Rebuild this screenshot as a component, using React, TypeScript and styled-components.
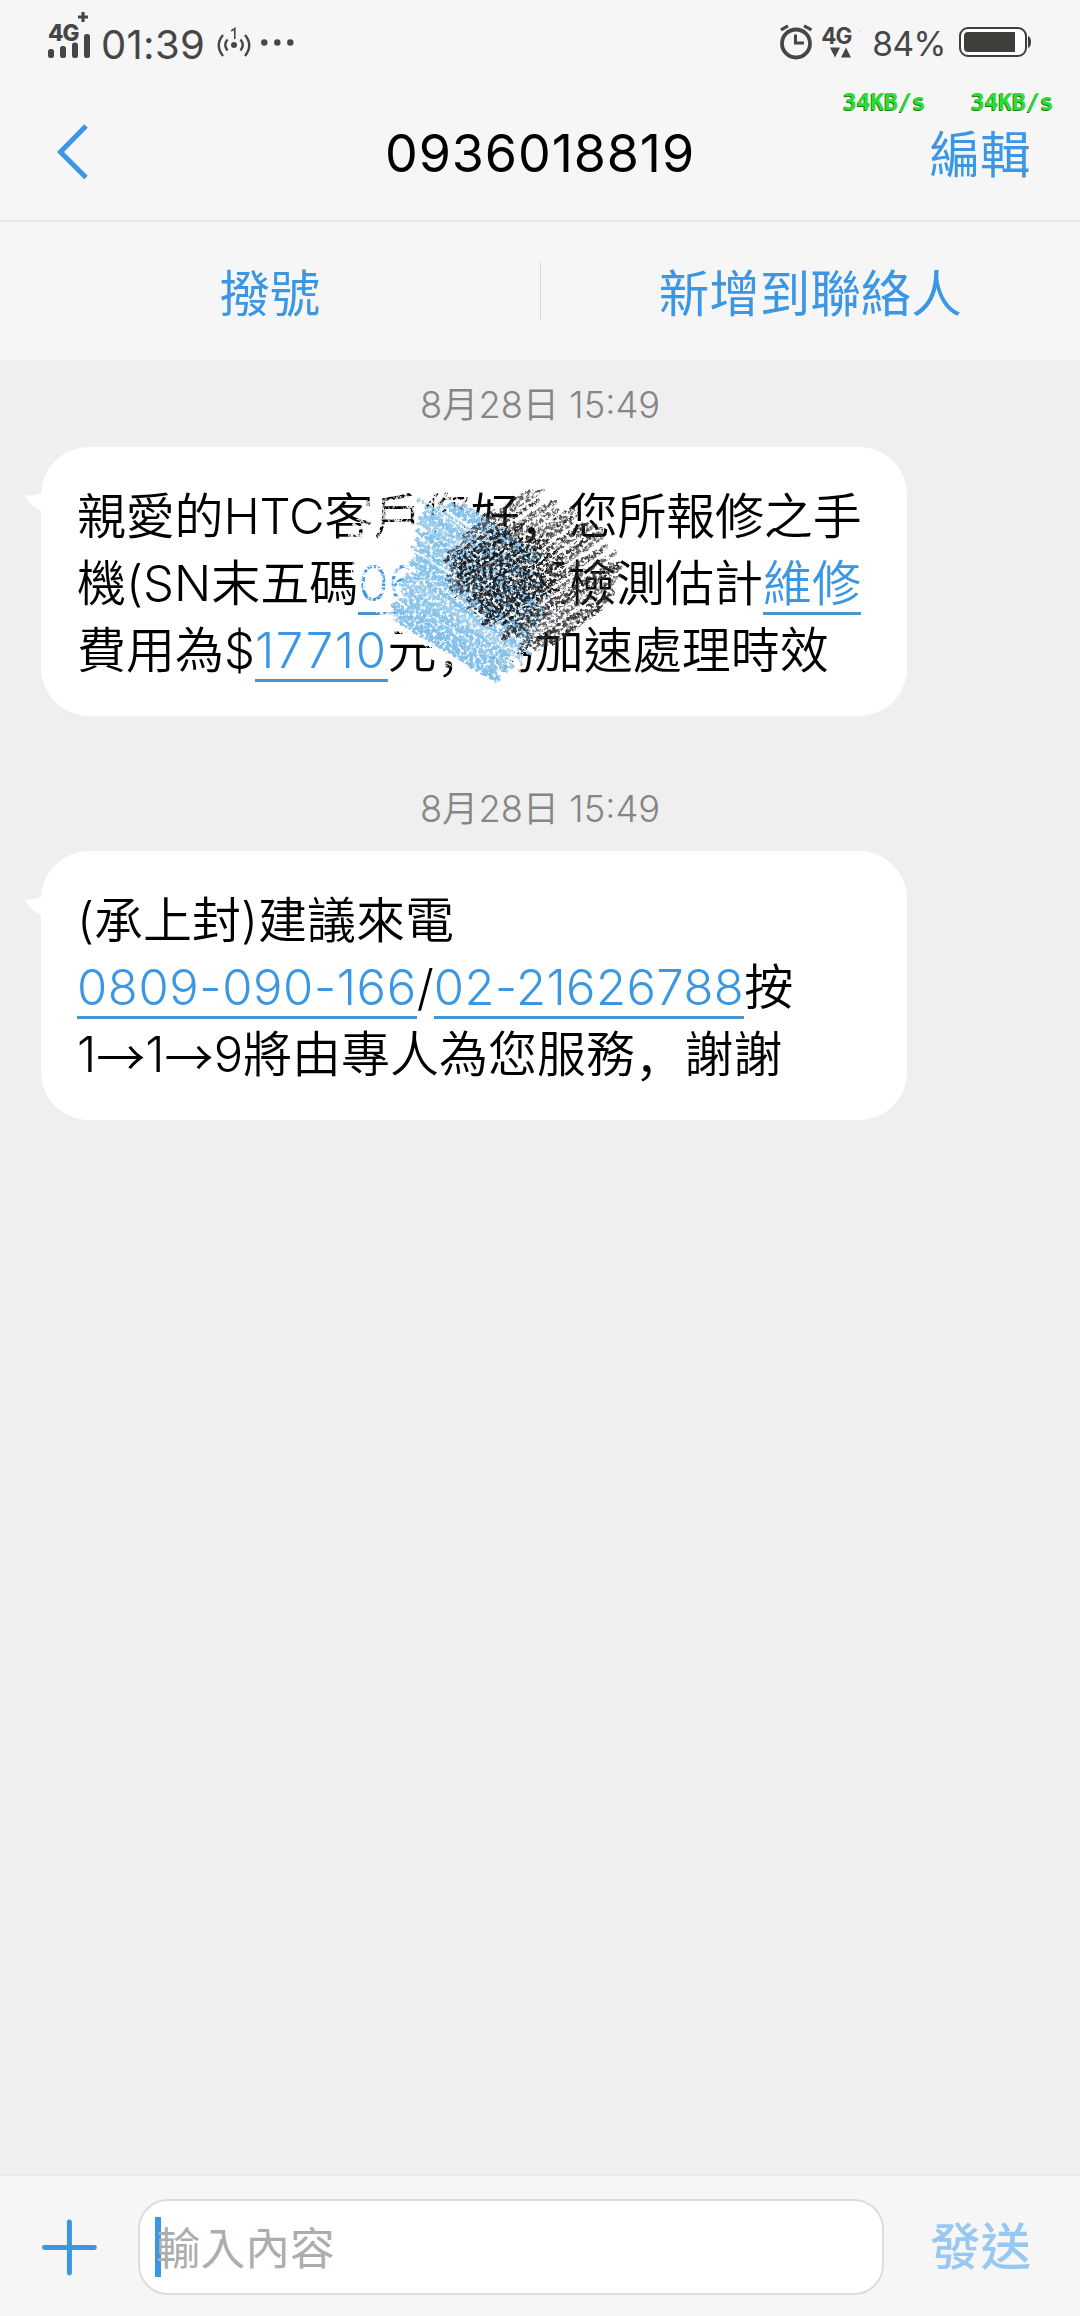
import React from "react";
import styled, { createGlobalStyle } from "styled-components";

const BLUE = "#3b97e3";
const UI_FONT = `Inter, "Noto Sans CJK TC", sans-serif`;

const GlobalStyle = createGlobalStyle`
  html, body { margin: 0; padding: 0; background: #efefef; }
  * { box-sizing: border-box; }
`;

const Screen = styled.div`
  width: 1080px;
  height: 2316px;
  display: flex;
  flex-direction: column;
  background: #efefef;
  font-family: ${UI_FONT};
  color: #000;
  overflow: hidden;
`;

const Top = styled.header`
  position: relative;
  height: 222px;
  background: #f6f6f6;
  border-bottom: 2px solid #e9e9e9;
  display: flex;
  flex-direction: column;
`;

const StatusBar = styled.div`
  height: 84px;
  padding: 0 48px;
  display: flex;
  justify-content: space-between;
  color: #464646;
`;

const StatusGroup = styled.div`
  display: flex;
  align-items: center;
  height: 84px;
`;

const StatusText = styled.span<{ $size: number; $spacing: number; $ml: number; $mr: number; $top: number }>`
  font-size: ${(p) => p.$size}px;
  letter-spacing: ${(p) => p.$spacing}px;
  line-height: 48px;
  margin-left: ${(p) => p.$ml}px;
  margin-right: ${(p) => p.$mr}px;
  padding-top: ${(p) => p.$top}px;
  white-space: nowrap;
`;

const NetworkMark = styled.span<{ $raise: number }>`
  display: flex;
  flex-direction: column;
  height: 40px;
  margin-top: ${(p) => p.$raise}px;
`;

const NetworkName = styled.span<{ $weight: number }>`
  display: flex;
  height: 21px;
  font-size: 22.5px;
  line-height: 21px;
  letter-spacing: -1px;
  font-weight: ${(p) => p.$weight};
`;

const SpeedRow = styled.div`
  position: absolute;
  top: 88px;
  right: 27px;
  display: flex;
  gap: 46px;
`;

const Speed = styled.span`
  font-family: "DejaVu Sans Mono", monospace;
  font-weight: 700;
  font-size: 22.9px;
  line-height: 28px;
  width: 82px;
  color: #2fdc2f;
  text-shadow: -1px 1px 0 #1a7d1a;
`;

const TitleBar = styled.div`
  height: 136px;
  display: grid;
  grid-template-columns: 200px 1fr 200px;
  align-items: center;
`;

const BackButton = styled.button`
  border: 0;
  background: none;
  padding: 0 0 0 57px;
  height: 56px;
  display: flex;
`;

const Title = styled.h1`
  margin: 0;
  padding-top: 3px;
  text-align: center;
  font-weight: 400;
  font-size: 52px;
  letter-spacing: 0.9px;
  line-height: 64px;
`;

const TextButton = styled.button<{ $weight?: number; $faded?: boolean; $drop?: number }>`
  border: 0;
  background: none;
  padding: ${(p) => p.$drop ?? 0}px 0 0;
  font-family: ${UI_FONT};
  font-size: 50.5px;
  line-height: 64px;
  font-weight: ${(p) => p.$weight ?? 400};
  color: ${(p) => (p.$faded ? "#98c8f2" : BLUE)};
  white-space: nowrap;
`;

const Actions = styled.nav`
  height: 138px;
  background: #f6f6f6;
  display: grid;
  grid-template-columns: 1fr 1px 1fr;
  align-items: center;
  text-align: center;
`;

const Divider = styled.i`
  height: 60px;
  background: #dcdcdc;
`;

const Thread = styled.main`
  flex: 1;
  padding-top: 3px;
  display: flex;
  flex-direction: column;
  align-items: flex-start;
`;

const Stamp = styled.time`
  align-self: stretch;
  height: 84px;
  line-height: 85px;
  text-align: center;
  font-size: 36.3px;
  font-weight: 350;
  color: #858585;
`;

const Bubble = styled.section`
  position: relative;
  width: 866px;
  height: 269px;
  margin: 0 0 51px 41px;
  padding: 34px 36px;
  background: #fff;
  border-radius: 48px;
`;

const Tail = styled.svg`
  position: absolute;
  left: -17px;
  top: 46px;
`;

const Line = styled.p<{ $spacing?: number }>`
  margin: 0;
  height: 67px;
  display: flex;
  white-space: nowrap;
  font-size: 49px;
  line-height: 72px;
  font-weight: 350;
  letter-spacing: ${(p) => p.$spacing ?? 0}px;
`;

const Link = styled.a<{ $spacing?: number }>`
  height: 67px;
  color: ${BLUE};
  border-bottom: 3px solid #4794cf;
  letter-spacing: ${(p) => p.$spacing ?? 0}px;
`;

const HiddenDigits = styled.span`
  display: inline-block;
  width: 100px;
`;

const CJK = styled.span<{ $shift?: number }>`
  font-family: "Noto Sans CJK SC", sans-serif;
  letter-spacing: ${(p) => p.$shift ?? 0}px;
`;

const Scribble = styled.svg`
  position: absolute;
  left: 299px;
  top: 33px;
  pointer-events: none;
`;

const Composer = styled.footer`
  height: 142px;
  background: #f6f6f6;
  border-top: 2px solid #e9e9e9;
  display: flex;
  align-items: center;
  padding: 2px 49px 0 41px;
`;

const Field = styled.div`
  width: 748px;
  height: 96px;
  margin: 0 46px 0 40px;
  padding-left: 15px;
  background: #fff;
  border: 2px solid #dcdcdc;
  border-radius: 30px;
  display: flex;
  align-items: center;
`;

const Caret = styled.i`
  width: 6px;
  height: 60px;
  background: ${BLUE};
`;

const Placeholder = styled.span`
  margin-left: -5px;
  padding-top: 3px;
  font-size: 44.7px;
  line-height: 60px;
  color: #adadad;
`;

type Pt = [number, number];
type Stroke = { x1: number; y1: number; x2: number; y2: number; w: number; o: number };

const makeRandom = (seed: number) => () => {
  seed = (seed * 1664525 + 1013904223) % 4294967296;
  return seed / 4294967296;
};

// Fills a polygon with roughly parallel hand-drawn strokes.
function hatch(poly: Pt[], deg: number, step: number, width: number, jitter: number, seed: number): Stroke[] {
  const rnd = makeRandom(seed);
  const a = (deg * Math.PI) / 180;
  const dx = Math.cos(a);
  const dy = Math.sin(a);
  const rotated = poly.map(([x, y]) => [x * dx + y * dy, -x * dy + y * dx] as Pt);
  const vs = rotated.map((p) => p[1]);
  const out: Stroke[] = [];
  for (let v = Math.min(...vs) + 1; v < Math.max(...vs); v += step * (0.6 + rnd() * 0.8)) {
    const hits: number[] = [];
    rotated.forEach((p, i) => {
      const q = rotated[(i + 1) % rotated.length];
      if (p[1] > v !== q[1] > v) hits.push(p[0] + ((v - p[1]) / (q[1] - p[1])) * (q[0] - p[0]));
    });
    if (hits.length < 2) continue;
    const u1 = Math.min(...hits) + (rnd() - 0.5) * jitter;
    const u2 = Math.max(...hits) + (rnd() - 0.5) * jitter;
    const v2 = v + (rnd() - 0.5) * 7;
    out.push({
      x1: u1 * dx - v * dy,
      y1: u1 * dy + v * dx,
      x2: u2 * dx - v2 * dy,
      y2: u2 * dy + v2 * dx,
      w: width * (0.6 + rnd() * 0.8),
      o: 0.7 + rnd() * 0.3,
    });
  }
  return out;
}

const paleStrokes = hatch([[34, 22], [75, 10], [125, 18], [125, 40], [60, 60], [70, 150], [110, 190], [60, 155], [20, 110], [12, 60]], 24, 4, 4.6, 14, 5);
const whiteStrokes = hatch([[85, 38], [135, 32], [230, 95], [215, 135], [178, 172], [182, 186], [130, 190], [65, 150], [72, 80]], 28, 2.6, 6, 10, 9);
const blueStrokes = hatch([[85, 24], [130, 28], [195, 72], [200, 130], [184, 170], [150, 200], [58, 142], [78, 75]], 33, 3.2, 4.6, 16, 11);
const blackStrokes = hatch([[112, 72], [150, 32], [196, 12], [225, 26], [272, 72], [276, 108], [258, 135], [210, 166], [190, 168], [140, 130], [106, 92]], -33, 4.8, 4.4, 18, 23);
const coreStrokes = hatch([[118, 82], [165, 45], [205, 60], [225, 100], [188, 138], [160, 148], [118, 100]], -33, 4.8, 4.2, 16, 41);

const Strokes = ({ items, color, filter }: { items: Stroke[]; color: string; filter: string }) => (
  <g stroke={color} strokeLinecap="round" filter={filter}>
    {items.map((s, i) => (
      <line key={i} x1={s.x1} y1={s.y1} x2={s.x2} y2={s.y2} strokeWidth={s.w} opacity={s.o} />
    ))}
  </g>
);

const Grain = ({ id, seed, gain, bias }: { id: string; seed: number; gain: number; bias: number }) => (
  <filter id={id} x="0" y="0" width="300" height="230" filterUnits="userSpaceOnUse" colorInterpolationFilters="sRGB">
    <feTurbulence type="fractalNoise" baseFrequency="0.3" numOctaves="3" seed={seed} result="n" />
    <feColorMatrix in="n" type="matrix" values={`0 0 0 0 0  0 0 0 0 0  0 0 0 0 0  ${gain} 0 0 0 ${bias}`} result="m" />
    <feDisplacementMap in="SourceGraphic" in2="n" scale="5" xChannelSelector="R" yChannelSelector="G" result="d" />
    <feComposite in="d" in2="m" operator="in" />
  </filter>
);

const CrayonScribble = () => (
  <Scribble width="300" height="230" viewBox="0 0 300 230">
    <defs>
      <Grain id="grainPale" seed={3} gain={7} bias={-2.7} />
      <Grain id="grainWhite" seed={5} gain={6} bias={-1.2} />
      <Grain id="grainBlue" seed={8} gain={5} bias={-1.5} />
      <Grain id="grainBlack" seed={14} gain={5} bias={-1.9} />
    </defs>
    <Strokes items={paleStrokes} color="#fff" filter="url(#grainPale)" />
    <Strokes items={whiteStrokes} color="#fff" filter="url(#grainWhite)" />
    <Strokes items={blueStrokes} color="#80bfea" filter="url(#grainBlue)" />
    <Strokes items={blackStrokes} color="#2e2e2e" filter="url(#grainBlack)" />
    <Strokes items={coreStrokes} color="#16191c" filter="url(#grainBlack)" />
  </Scribble>
);

const BubbleTail = () => (
  <Tail width="20" height="20" viewBox="0 0 20 20" fill="#fff">
    <path d="M0.5 2C7 3 13 2 18 0V18C10 15 4 9 0.5 2Z" />
  </Tail>
);

const PlusMark = ({ size }: { size: number }) => (
  <svg width="10" height="10" viewBox="0 0 10 10" stroke="#464646" strokeWidth={size}>
    <path d="M5 0V10M0 5H10" />
  </svg>
);

const SignalBars = () => (
  <svg width="43" height="25" viewBox="0 11 43 25" fill="#464646">
    <rect x="0" y="27" width="6" height="9" rx="2.5" />
    <rect x="12" y="24" width="6" height="12" rx="2.5" />
    <rect x="24" y="20.5" width="6" height="15.5" rx="2.5" />
    <rect x="36" y="12" width="6" height="24" rx="2.5" />
  </svg>
);

const SignalColumn = styled(NetworkMark)`
  width: 43px;
  svg:last-child { margin-top: -10px; }
`;

const DataColumn = styled(NetworkMark)`
  width: 40px;
  svg:last-child { margin: 1px 0 0 9px; }
`;

const HotspotIcon = () => (
  <svg width="34" height="34" viewBox="0 0 34 34" fill="none" stroke="#464646" strokeWidth="2.4">
    <circle cx="17" cy="20" r="3" fill="#464646" stroke="none" />
    <path d="M10.5 14.5Q6 20 10.5 25.500M23.5 14.5Q28 20 23.5 25.500M6 10Q-2.500 20 6 31M28 10Q36.500 20 28 31" />
    <path d="M14.2 6L17.8 3.500V14" strokeWidth="1.6" />
  </svg>
);

const MoreDots = () => (
  <svg width="33" height="7" viewBox="0 0 33 7" fill="#464646">
    <circle cx="3.300" cy="3.500" r="3.200" />
    <circle cx="16.300" cy="3.500" r="3.200" />
    <circle cx="29.300" cy="3.500" r="3.200" />
  </svg>
);

const AlarmIcon = () => (
  <svg width="33" height="36" viewBox="0 0 33 36" fill="none" stroke="#464646">
    <circle cx="16" cy="19.500" r="14" strokeWidth="3.800" />
    <path d="M15.500 10.500V19H24" strokeWidth="3" />
    <path d="M1 5.800L8 1.800M24 1.800L31.500 5.800" strokeWidth="3.200" />
  </svg>
);

const DataArrows = () => (
  <svg width="22" height="11" viewBox="0 0 22 11" fill="#464646">
    <path d="M0 0.500H10L5 10.500zM11 10.500H21L16 0.500z" />
  </svg>
);

const BatteryIcon = () => (
  <svg width="73" height="32" viewBox="0 0 73 32">
    <rect x="1" y="2" width="66" height="28" rx="8" fill="#fff" stroke="#3e3e3a" strokeWidth="2" />
    <path d="M9 6H56V26H9Q5 26 5 22V10Q5 6 9 6Z" fill="#3e3f3a" />
    <path d="M69 10Q72 11 72 16T69 22Z" fill="#3e3f3a" />
  </svg>
);

const Gap = styled.i<{ $w: number }>`
  width: ${(p) => p.$w}px;
`;

export default function App() {
  return (
    <Screen>
      <GlobalStyle />
      <Top>
        <StatusBar>
          <StatusGroup>
            <SignalColumn $raise={-1}>
              <NetworkName $weight={800}>4G<PlusMark size={3.2} /></NetworkName>
              <SignalBars />
            </SignalColumn>
            <StatusText $size={40} $spacing={0.3} $ml={10} $mr={12} $top={5}>01:39</StatusText>
            <HotspotIcon />
            <Gap $w={10} />
            <MoreDots />
          </StatusGroup>
          <StatusGroup>
            <AlarmIcon />
            <Gap $w={8} />
            <DataColumn $raise={5}>
              <NetworkName $weight={700}>4G<PlusMark size={3} /></NetworkName>
              <DataArrows />
            </DataColumn>
            <StatusText $size={33.5} $spacing={-0.5} $ml={11} $mr={13} $top={3}>84%</StatusText>
            <BatteryIcon />
          </StatusGroup>
        </StatusBar>
        <TitleBar>
          <BackButton aria-label="返回">
            <svg width="32" height="56" viewBox="0 0 32 56" fill="none" stroke={BLUE} strokeWidth="5">
              <path d="M29 2L3.500 28L29 53.500" />
            </svg>
          </BackButton>
          <Title>0936018819</Title>
          <TextButton $drop={6}>編輯</TextButton>
        </TitleBar>
        <SpeedRow>
          <Speed>34KB/s</Speed>
          <Speed>34KB/s</Speed>
        </SpeedRow>
      </Top>
      <Actions>
        <TextButton $drop={5}>撥號</TextButton>
        <Divider />
        <TextButton $drop={5}>新增到聯絡人</TextButton>
      </Actions>
      <Thread>
        <Stamp>8月28日 15:49</Stamp>
        <Bubble>
          <BubbleTail />
          <Line $spacing={-0.2}>親愛的HTC客戶您好<CJK>，</CJK>您所報修之手</Line>
          <Line>機(SN末五碼<Link>06<HiddenDigits /></Link>經檢測估計<Link>維修</Link></Line>
          <Line>費用為$<Link $spacing={1.6}>17710</Link>元<CJK>，</CJK>為加速處理時效</Line>
          <CrayonScribble />
        </Bubble>
        <Stamp>8月28日 15:49</Stamp>
        <Bubble>
          <BubbleTail />
          <Line>(承上封)建議來電</Line>
          <Line><Link $spacing={0.6}>0809-090-166</Link>/<Link $spacing={0.4}>02-21626788</Link>按</Line>
          <Line>1<CJK>→</CJK>1<CJK>→</CJK>9將由專人為您服務<CJK>，</CJK>謝謝</Line>
        </Bubble>
      </Thread>
      <Composer>
        <svg width="57" height="57" viewBox="0 0 57 57" stroke={BLUE} strokeWidth="5" strokeLinecap="round">
          <path d="M28.500 3V54M3.500 28.500H53.500" />
        </svg>
        <Field>
          <Caret />
          <Placeholder>輸入內容</Placeholder>
        </Field>
        <TextButton $weight={500} $faded>發送</TextButton>
      </Composer>
    </Screen>
  );
}
